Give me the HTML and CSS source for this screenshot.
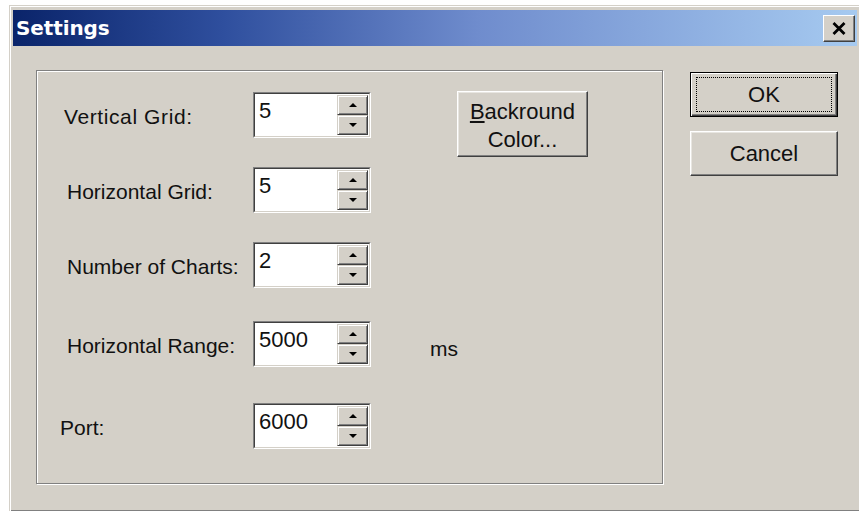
FILE: index.html
```html
<!DOCTYPE html>
<html lang="en">
<head>
<meta charset="utf-8">
<title>Settings</title>
<link rel="stylesheet" href="styles.css">
</head>
<body>
<div class="window">
  <div class="titlebar">
    <span class="title">Settings</span>
    <button class="close" type="button" aria-label="Close">
      <svg width="14" height="13" viewBox="0 0 14 13"><path d="M1.5 1 L12.5 12 M12.5 1 L1.5 12" stroke="#000" stroke-width="2.8" fill="none"/></svg>
    </button>
  </div>
  <div class="client">
    <div class="group">
      <div class="form">
        <label class="lbl lbl-v">Vertical Grid:</label>
        <div class="spin"><div class="spin-in"><span class="val">5</span><div class="arrows"><span class="arr"><i class="up"></i></span><span class="arr"><i class="down"></i></span></div></div></div>
        <button class="btn btn-color" type="button"><span><u>B</u>ackround</span><span>Color...</span></button>

        <label class="lbl">Horizontal Grid:</label>
        <div class="spin"><div class="spin-in"><span class="val">5</span><div class="arrows"><span class="arr"><i class="up"></i></span><span class="arr"><i class="down"></i></span></div></div></div>

        <label class="lbl">Number of Charts:</label>
        <div class="spin"><div class="spin-in"><span class="val">2</span><div class="arrows"><span class="arr"><i class="up"></i></span><span class="arr"><i class="down"></i></span></div></div></div>

        <label class="lbl">Horizontal Range:</label>
        <div class="spin"><div class="spin-in"><span class="val">5000</span><div class="arrows"><span class="arr"><i class="up"></i></span><span class="arr"><i class="down"></i></span></div></div></div>
        <span class="unit">ms</span>

        <label class="lbl lbl-port">Port:</label>
        <div class="spin"><div class="spin-in"><span class="val">6000</span><div class="arrows"><span class="arr"><i class="up"></i></span><span class="arr"><i class="down"></i></span></div></div></div>
      </div>
    </div>
    <div class="actions">
      <button class="btn btn-default" type="button"><span class="focus">OK</span></button>
      <button class="btn" type="button">Cancel</button>
    </div>
  </div>
</div>
</body>
</html>
```

FILE: styles.css
```css
html, body {
  margin: 0;
  padding: 0;
  background: #ffffff;
  overflow: hidden;
  width: 859px;
  height: 511px;
}

body {
  font-family: "Liberation Sans", Arial, sans-serif;
  font-size: 21px;
  color: #111;
}

button {
  font: inherit;
  color: inherit;
  padding: 0;
  margin: 0;
}

/* dialog frame */
.window {
  box-sizing: border-box;
  margin: 5px 0 0 9px;
  width: 852px;
  height: 507px;
  padding: 4px 3px 3px 3px;
  background: #d4d0c8;
  border: 1px solid;
  border-color: #d4d0c8 #404040 #404040 #d4d0c8;
  box-shadow: inset 1px 1px 0 #ffffff, inset -1px -1px 0 #808080;
}

.titlebar {
  height: 36px;
  display: flex;
  align-items: center;
  justify-content: space-between;
  padding-left: 3px;
  background: linear-gradient(to right, #0a246a 0%, #2f4f9e 25%, #6f8ccd 55%, #a6caf0 100%);
}

.title {
  font-family: "DejaVu Sans", Verdana, sans-serif;
  font-weight: bold;
  font-size: 20px;
  color: #ffffff;
  letter-spacing: -0.1px;
}

.close {
  box-sizing: border-box;
  width: 32px;
  height: 27px;
  margin-right: 2px;
  display: flex;
  align-items: center;
  justify-content: center;
  background: #d4d0c8;
  border: 1px solid;
  border-color: #ffffff #404040 #404040 #ffffff;
  box-shadow: inset -1px -1px 0 #808080;
}

.client {
  display: flex;
  align-items: flex-start;
  gap: 27px;
  padding: 24px 0 0 23px;
}

/* etched group frame */
.group {
  box-sizing: border-box;
  width: 627px;
  height: 414px;
  border: 1px solid #808080;
  box-shadow: inset 1px 1px 0 #ffffff, 1px 1px 0 #ffffff;
  padding: 21px 0 0 30px;
}

.form {
  display: grid;
  grid-template-columns: 186px 118px 59px auto;
  grid-template-rows: 46px 46px 46px 50px 53px;
  row-gap: 29px;
  align-items: end;
}

.lbl {
  grid-column: 1;
  height: 46px;
  line-height: 50px;
  white-space: nowrap;
}
.lbl-v { margin-left: -3px; letter-spacing: 0.6px; }
.lbl-port { margin-left: -7px; }

.unit {
  grid-column: 4;
  height: 46px;
  line-height: 56px;
}

/* spin edit control */
.spin {
  grid-column: 2;
  box-sizing: border-box;
  width: 118px;
  height: 46px;
  border: 1px solid;
  border-color: #808080 #ffffff #ffffff #808080;
}
.spin-in {
  box-sizing: border-box;
  height: 100%;
  display: flex;
  background: #ffffff;
  border: 1px solid;
  border-color: #404040 #d4d0c8 #d4d0c8 #404040;
}
.val {
  flex: 1;
  padding: 3px 0 0 4px;
  font-size: 22px;
  line-height: 28px;
}
.arrows {
  width: 31px;
  display: flex;
  flex-direction: column;
  padding: 1px 1px 1px 0;
}
.arr {
  box-sizing: border-box;
  flex: 1;
  display: flex;
  align-items: center;
  justify-content: center;
  background: #d4d0c8;
  border: 1px solid;
  border-color: #d4d0c8 #404040 #404040 #d4d0c8;
  box-shadow: inset 1px 1px 0 #ffffff, inset -1px -1px 0 #808080;
}
.up, .down {
  width: 0;
  height: 0;
  border-left: 4px solid transparent;
  border-right: 4px solid transparent;
}
.up { border-bottom: 4px solid #000; }
.down { border-top: 4px solid #000; }

/* push buttons */
.btn {
  box-sizing: border-box;
  background: #d4d0c8;
  border: 1px solid;
  border-color: #ffffff #404040 #404040 #ffffff;
  box-shadow: inset -1px -1px 0 #808080, inset 1px 1px 0 #e8e6e1;
  display: flex;
  align-items: center;
  justify-content: center;
}

.btn-color {
  grid-column: 4;
  grid-row: 1 / span 2;
  align-self: start;
  margin: -1px 0 0 27px;
  width: 131px;
  height: 66px;
  flex-direction: column;
  font-size: 22px;
  line-height: 28px;
  padding-top: 3px;
}

.actions {
  display: flex;
  flex-direction: column;
  gap: 14px;
  padding-top: 2px;
}
.actions .btn {
  width: 148px;
  height: 45px;
  font-size: 22px;
}

.btn-default {
  border: 1px solid #000;
  box-shadow: inset 1px 1px 0 #ffffff, inset -1px -1px 0 #404040, inset -2px -2px 0 #808080;
  padding: 4px 5px;
}
.focus {
  box-sizing: border-box;
  width: 100%;
  height: 100%;
  display: flex;
  align-items: center;
  justify-content: center;
  border: 1px dotted #000;
}
```
